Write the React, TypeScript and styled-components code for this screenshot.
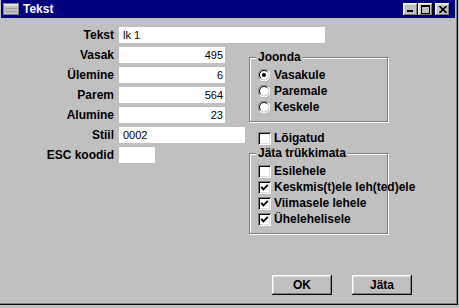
import styled, { createGlobalStyle } from 'styled-components';

const GlobalStyle = createGlobalStyle`
  html, body {
    margin: 0;
    padding: 0;
    background: #c0c0c0;
    overflow: hidden;
  }
  body {
    font-family: "Liberation Sans", Arial, sans-serif;
    font-size: 12px;
    color: #000;
  }
`;

const Window = styled.div`
  width: 460px;
  height: 308px;
  margin: -3px 0 0 -2px;
  padding: 3px;
  box-sizing: border-box;
  background: #c0c0c0;
  box-shadow: inset -1px -1px #0a0a0a, inset 1px 1px #dfdfdf,
    inset -2px -2px #808080, inset 2px 2px #fff;
  display: flex;
  flex-direction: column;
`;

const TitleBar = styled.div`
  height: 18px;
  background: #000080;
  display: flex;
  align-items: center;
  padding: 0 5px 0 2px;
`;

const TitleText = styled.span`
  margin-left: 4px;
  color: #fff;
  font-weight: bold;
  font-size: 12px;
`;

const TitleButtons = styled.div`
  margin-left: auto;
  display: flex;
`;

const TitleButton = styled.div<{ $gap?: boolean }>`
  width: 15px;
  height: 13px;
  margin-left: ${(p) => (p.$gap ? '2px' : '0')};
  background: #c0c0c0;
  box-shadow: inset -1px -1px #0a0a0a, inset 1px 1px #fff,
    inset -2px -2px #808080, inset 2px 2px #dfdfdf;
  display: flex;
  align-items: center;
  justify-content: center;
`;

const Content = styled.div`
  flex: 1;
  display: flex;
  flex-direction: column;
  padding-top: 9px;
`;

const FieldRow = styled.div`
  display: flex;
  align-items: center;
  gap: 5px;
  height: 16px;
`;

const Label = styled.span`
  width: 113px;
  text-align: right;
  font-weight: bold;
  font-size: 12px;
  white-space: nowrap;
`;

const Field = styled.div<{ $w: number; $right?: boolean }>`
  width: ${(p) => p.$w}px;
  height: 16px;
  box-sizing: border-box;
  background: #fff;
  padding: 0 2px 0 4px;
  font-size: 11px;
  line-height: 16px;
  text-align: ${(p) => (p.$right ? 'right' : 'left')};
  white-space: nowrap;
`;

const Columns = styled.div`
  display: flex;
  margin-top: 4px;
`;

const LeftCol = styled.div`
  width: 244px;
  display: flex;
  flex-direction: column;
  gap: 4px;
`;

const RightCol = styled.div`
  margin-left: 4px;
  padding-top: 10px;
  display: flex;
  flex-direction: column;
`;

const GroupBox = styled.div<{ $mt?: number }>`
  width: 139px;
  box-sizing: border-box;
  margin-top: ${(p) => p.$mt ?? 0}px;
  border: 1px solid #808080;
  box-shadow: inset 1px 1px #fff, 1px 1px #fff;
  padding: 0 0 6px 3px;
`;

const GroupTitle = styled.span`
  display: block;
  width: fit-content;
  margin: -7px 0 3px 3px;
  padding: 0 2px;
  height: 13px;
  line-height: 13px;
  background: #c0c0c0;
  font-weight: bold;
  font-size: 12px;
`;

const GroupItems = styled.div`
  padding-left: 5px;
  display: flex;
  flex-direction: column;
`;

const OptionRow = styled.div<{ $mt?: number; $ml?: number }>`
  height: 16px;
  display: flex;
  align-items: center;
  gap: 3px;
  margin-top: ${(p) => p.$mt ?? 0}px;
  margin-left: ${(p) => p.$ml ?? 0}px;
  font-weight: bold;
  font-size: 12px;
  white-space: nowrap;
`;

const IconSlot = styled.span`
  width: 13px;
  height: 13px;
  display: flex;
  align-items: center;
`;

const CheckBox = styled.span`
  width: 13px;
  height: 13px;
  background: #fff;
  box-shadow: inset 1px 1px #808080, inset -1px -1px #fff,
    inset 2px 2px #0a0a0a, inset -2px -2px #dfdfdf;
  display: block;
`;

const ButtonRow = styled.div`
  display: flex;
  justify-content: flex-end;
  gap: 20px;
  padding-right: 43px;
  margin-top: 41px;
`;

const Button = styled.div`
  width: 60px;
  height: 20px;
  background: #c0c0c0;
  box-shadow: inset -1px -1px #0a0a0a, inset 1px 1px #fff,
    inset -2px -2px #808080, inset 2px 2px #dfdfdf;
  display: flex;
  align-items: center;
  justify-content: center;
  font-weight: bold;
  font-size: 12px;
`;

function WindowIcon() {
  return (
    <svg width="16" height="14" viewBox="0 0 16 14" shapeRendering="crispEdges">
      <rect x="0.5" y="1.5" width="15" height="11" fill="#c0c0c0" stroke="#808080" />
      <rect x="1" y="2" width="14" height="2" fill="#dfdfdf" />
      <line x1="2" y1="6.5" x2="14" y2="6.5" stroke="#a0a0a0" />
      <line x1="2" y1="9.5" x2="14" y2="9.5" stroke="#a0a0a0" />
    </svg>
  );
}

function Radio({ checked }: { checked?: boolean }) {
  return (
    <svg width="12" height="12" viewBox="0 0 12 12">
      <path d="M10.2 1.8 A5.9 5.9 0 0 0 1.8 10.2" fill="none" stroke="#808080" />
      <path d="M1.8 10.2 A5.9 5.9 0 0 0 10.2 1.8" fill="none" stroke="#fff" />
      <circle cx="6" cy="6" r="4.6" fill="#fff" />
      <path d="M9.2 2.8 A4.5 4.5 0 0 0 2.8 9.2" fill="none" stroke="#0a0a0a" />
      <path d="M2.8 9.2 A4.5 4.5 0 0 0 9.2 2.8" fill="none" stroke="#dfdfdf" />
      {checked && <circle cx="6" cy="6" r="2" fill="#000" />}
    </svg>
  );
}

function Check({ checked }: { checked?: boolean }) {
  return (
    <CheckBox>
      {checked && (
        <svg width="13" height="13" viewBox="0 0 13 13">
          <polyline points="3.3,6 5.5,8.3 9.8,3.8" fill="none" stroke="#000" strokeWidth="1.9" />
        </svg>
      )}
    </CheckBox>
  );
}

const leftFields = [
  { label: 'Vasak', value: '495', w: 106, right: true },
  { label: 'Ülemine', value: '6', w: 106, right: true },
  { label: 'Parem', value: '564', w: 106, right: true },
  { label: 'Alumine', value: '23', w: 106, right: true },
  { label: 'Stiil', value: '0002', w: 126, right: false },
  { label: 'ESC koodid', value: '', w: 36, right: false },
];

const radios = [
  { text: 'Vasakule', checked: true },
  { text: 'Paremale', checked: false },
  { text: 'Keskele', checked: false },
];

const skips = [
  { text: 'Esilehele', checked: false },
  { text: 'Keskmis(t)ele leh(ted)ele', checked: true },
  { text: 'Viimasele lehele', checked: true },
  { text: 'Ühelehelisele', checked: true },
];

export default function App() {
  return (
    <>
      <GlobalStyle />
      <Window>
        <TitleBar>
          <WindowIcon />
          <TitleText>Tekst</TitleText>
          <TitleButtons>
            <TitleButton>
              <svg width="8" height="8" viewBox="0 0 8 8" shapeRendering="crispEdges">
                <rect x="0" y="5" width="6" height="2" fill="#000" />
              </svg>
            </TitleButton>
            <TitleButton>
              <svg width="9" height="9" viewBox="0 0 9 9" shapeRendering="crispEdges">
                <rect x="0.5" y="0.5" width="8" height="8" fill="none" stroke="#000" />
                <rect x="0" y="1" width="9" height="1" fill="#000" />
              </svg>
            </TitleButton>
            <TitleButton $gap>
              <svg width="8" height="7" viewBox="0 0 8 7">
                <path d="M0.5 0 L7.5 7 M7.5 0 L0.5 7" stroke="#000" strokeWidth="1.6" />
              </svg>
            </TitleButton>
          </TitleButtons>
        </TitleBar>
        <Content>
          <FieldRow>
            <Label>Tekst</Label>
            <Field $w={206}>lk 1</Field>
          </FieldRow>
          <Columns>
            <LeftCol>
              {leftFields.map((f) => (
                <FieldRow key={f.label}>
                  <Label>{f.label}</Label>
                  <Field $w={f.w} $right={f.right}>{f.value}</Field>
                </FieldRow>
              ))}
            </LeftCol>
            <RightCol>
              <GroupBox>
                <GroupTitle>Joonda</GroupTitle>
                <GroupItems>
                  {radios.map((r) => (
                    <OptionRow key={r.text}>
                      <IconSlot><Radio checked={r.checked} /></IconSlot>
                      {r.text}
                    </OptionRow>
                  ))}
                </GroupItems>
              </GroupBox>
              <OptionRow $mt={8} $ml={9}>
                <IconSlot><Check /></IconSlot>
                Lõigatud
              </OptionRow>
              <GroupBox $mt={7}>
                <GroupTitle>Jäta trükkimata</GroupTitle>
                <GroupItems>
                  {skips.map((s) => (
                    <OptionRow key={s.text}>
                      <IconSlot><Check checked={s.checked} /></IconSlot>
                      {s.text}
                    </OptionRow>
                  ))}
                </GroupItems>
              </GroupBox>
            </RightCol>
          </Columns>
          <ButtonRow>
            <Button>OK</Button>
            <Button>Jäta</Button>
          </ButtonRow>
        </Content>
      </Window>
    </>
  );
}
